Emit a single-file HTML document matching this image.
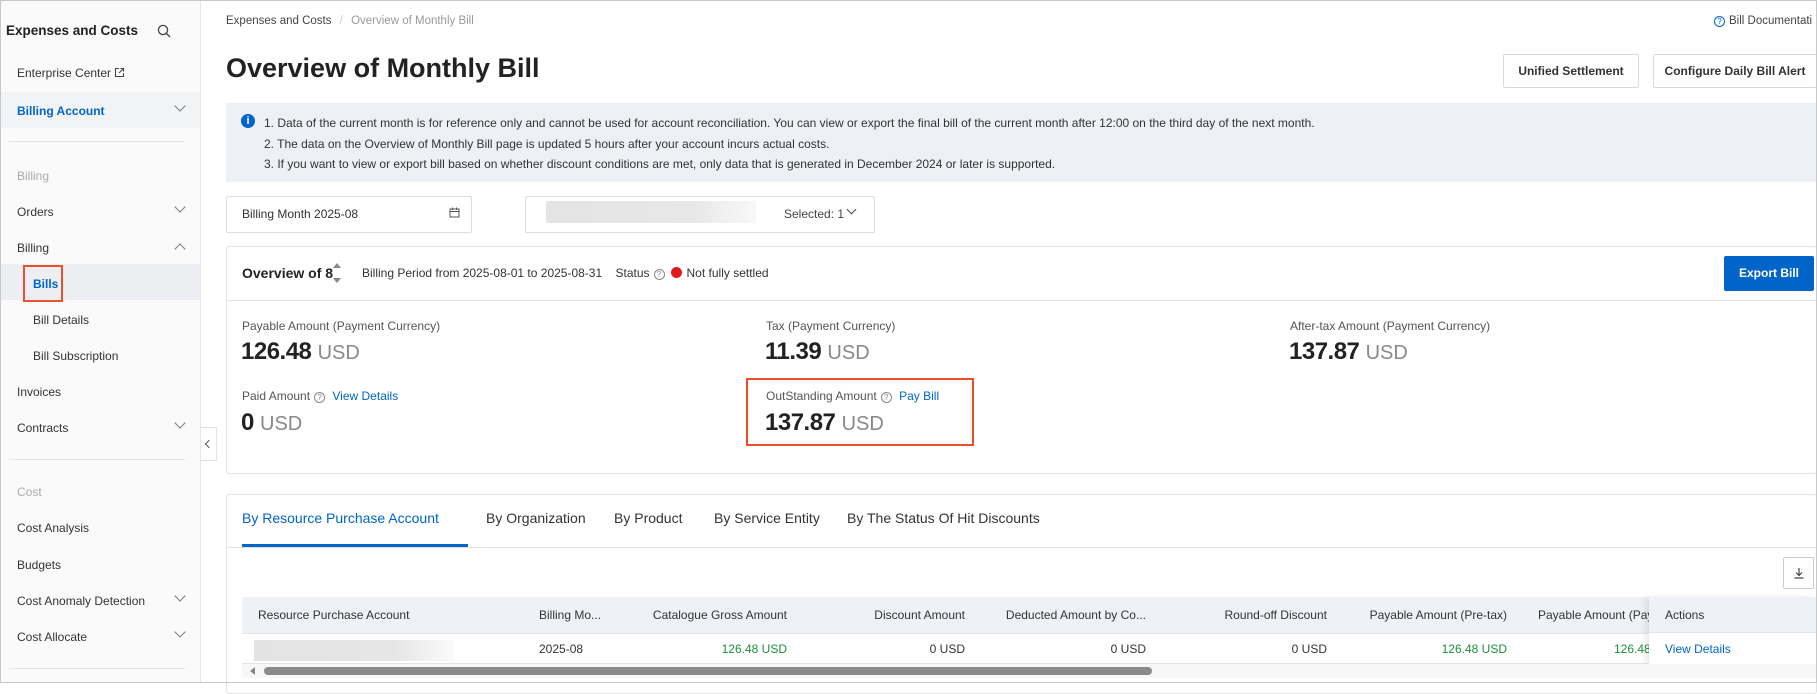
<!DOCTYPE html>
<html><head><meta charset="utf-8"><style>
*{box-sizing:border-box;margin:0;padding:0}
body{width:1817px;height:683px;overflow:hidden;background:#fff;font-family:"Liberation Sans",Arial,sans-serif;color:#333;font-size:12px;position:relative}
.a{position:absolute;white-space:nowrap}
.frame{position:absolute;left:0;top:0;width:1817px;height:683px;border:1px solid #c8c8c8;pointer-events:none;z-index:10}
.side{position:absolute;left:0;top:0;width:201px;height:683px;background:#fafafa;border-right:1px solid #e6e6e6}
.si{position:absolute;left:17px;font-size:12px;color:#333}
.chev{position:absolute;left:176px;width:8px;height:8px;border-right:1.2px solid #777;border-bottom:1.2px solid #777;transform:rotate(45deg)}
.chevu{transform:rotate(-135deg)}
.div{position:absolute;left:9px;width:176px;height:1px;background:#e3e3e3}
.btn{position:absolute;border:1px solid #d9d9d9;background:#fff;border-radius:2px;font-size:12px;font-weight:bold;color:#333;text-align:center}
.lbl{font-size:12px;color:#555}
.val{font-size:24px;font-weight:bold;color:#222;letter-spacing:-0.5px}
.val span{font-weight:normal;color:#888;font-size:20px;letter-spacing:0}
.q{display:inline-block;width:11px;height:11px;border:1px solid #888;border-radius:50%;font-size:8px;line-height:9px;text-align:center;color:#888;vertical-align:0px;margin:0 4px}
.link{color:#0064c8}
.th{position:absolute;top:608px;font-size:12px;color:#333}
.td{position:absolute;top:642px;font-size:12px;color:#333}
.g{color:#1a8f3c}
</style></head><body>
<div class="frame"></div>
<div class="side">
 <div class="a" style="left:6px;top:23px;font-size:13.5px;font-weight:bold;color:#222">Expenses and Costs</div>
 <svg class="a" style="left:157px;top:24px" width="14" height="14" viewBox="0 0 14 14"><circle cx="6" cy="6" r="4.6" fill="none" stroke="#444" stroke-width="1.3"/><line x1="9.5" y1="9.5" x2="13" y2="13" stroke="#444" stroke-width="1.3"/></svg>
 <div class="si" style="top:66px">Enterprise Center <svg width="11" height="11" viewBox="0 0 11 11" style="vertical-align:-1px"><path d="M5 1.5H1.5v8h8V6M6.5 1.5h3v3M9.5 1.5L5 6" fill="none" stroke="#444" stroke-width="1.1"/></svg></div>
 <div class="a" style="left:0;top:92px;width:200px;height:36px;background:#f2f3f5"></div>
 <div class="si" style="top:104px;color:#0064c8;font-weight:bold">Billing Account</div><div class="chev" style="top:102px"></div>
 <div class="div" style="top:141px"></div>
 <div class="si" style="top:169px;color:#aaa">Billing</div>
 <div class="si" style="top:205px">Orders</div><div class="chev" style="top:203px"></div>
 <div class="si" style="top:241px">Billing</div><div class="chev chevu" style="top:245px"></div>
 <div class="a" style="left:0;top:264px;width:200px;height:36px;background:#eceef2"></div>
 <div class="si" style="left:33px;top:277px;color:#0064c8;font-weight:bold">Bills</div>
 <div class="a" style="left:23px;top:265px;width:40px;height:37px;border:2px solid #e8512a"></div>
 <div class="si" style="left:33px;top:313px">Bill Details</div>
 <div class="si" style="left:33px;top:349px">Bill Subscription</div>
 <div class="si" style="top:385px">Invoices</div>
 <div class="si" style="top:421px">Contracts</div><div class="chev" style="top:419px"></div>
 <div class="div" style="top:459px"></div>
 <div class="si" style="top:485px;color:#aaa">Cost</div>
 <div class="si" style="top:521px">Cost Analysis</div>
 <div class="si" style="top:558px">Budgets</div>
 <div class="si" style="top:594px">Cost Anomaly Detection</div><div class="chev" style="top:592px"></div>
 <div class="si" style="top:630px">Cost Allocate</div><div class="chev" style="top:628px"></div>
 <div class="div" style="top:668px"></div>
</div>
<div class="a" style="left:201px;top:427px;width:16px;height:34px;border:1px solid #e3e3e3;border-left:none;background:#fff"><div class="a" style="left:5px;top:13px;width:6px;height:6px;border-left:1.3px solid #555;border-bottom:1.3px solid #555;transform:rotate(45deg)"></div></div>

<div class="a" style="left:226px;top:15px;font-size:11.5px;color:#444">Expenses and Costs <span style="color:#ccc;margin:0 5px">/</span> <span style="color:#999">Overview of Monthly Bill</span></div>
<div class="a" style="left:1714px;top:15px;font-size:11.5px;color:#444"><span class="q" style="border-color:#0064c8;color:#0064c8;margin-left:0">?</span>Bill Documentati</div>
<div class="a" style="left:226px;top:53px;font-size:27px;font-weight:bold;color:#222">Overview of Monthly Bill</div>
<div class="btn" style="left:1503px;top:54px;width:136px;height:34px;line-height:32px">Unified Settlement</div>
<div class="btn" style="left:1653px;top:54px;width:164px;height:34px;line-height:32px">Configure Daily Bill Alert</div>

<div class="a" style="left:226px;top:103px;width:1591px;height:79px;background:#edf0f5"></div>
<div class="a" style="left:241px;top:114px;width:14px;height:14px;border-radius:50%;background:#0064c8;color:#fff;font-size:11px;font-weight:bold;text-align:center;line-height:14px">i</div>
<div class="a" style="left:264px;top:113px;font-size:12px;color:#333;line-height:20.5px">1. Data of the current month is for reference only and cannot be used for account reconciliation. You can view or export the final bill of the current month after 12:00 on the third day of the next month.<br>2. The data on the Overview of Monthly Bill page is updated 5 hours after your account incurs actual costs.<br>3. If you want to view or export bill based on whether discount conditions are met, only data that is generated in December 2024 or later is supported.</div>

<div class="a" style="left:226px;top:196px;width:246px;height:37px;border:1px solid #ddd;border-radius:2px"></div>
<div class="a" style="left:242px;top:207px;font-size:12px">Billing Month 2025-08</div>
<svg class="a" style="left:477px;top:207px;left:477px" width="0" height="0"></svg>
<svg class="a" style="left:477px;top:207px" width="1" height="1"></svg>
<svg class="a" style="left:478px;top:207px" width="0" height="0"></svg>
<svg class="a" style="left:477px;top:0" width="0" height="0"></svg>
<svg class="a" style="left:477px;top:207px" width="0" height="0"></svg>
<svg class="a" style="left:476px;top:207px" width="0" height="0"></svg>
<svg class="a" style="left:477px;top:207px" width="0" height="0"></svg>
<svg class="a" style="left:449px;top:207px" width="11" height="11" viewBox="0 0 11 11"><rect x="1" y="2" width="9" height="8" fill="none" stroke="#555"/><line x1="1" y1="4.5" x2="10" y2="4.5" stroke="#555"/><line x1="3.5" y1="0.5" x2="3.5" y2="3" stroke="#555"/><line x1="7.5" y1="0.5" x2="7.5" y2="3" stroke="#555"/></svg>
<div class="a" style="left:525px;top:196px;width:350px;height:37px;border:1px solid #ddd;border-radius:2px"></div>
<div class="a" style="left:546px;top:201px;width:210px;height:22px;background:linear-gradient(90deg,#e4e4e4,#e8e8e8 70%,#f8f8f8)"></div>
<div class="a" style="left:784px;top:207px;font-size:12px;color:#444">Selected: 1</div>
<div class="a" style="left:848px;top:206px;width:7px;height:7px;border-right:1.3px solid #444;border-bottom:1.3px solid #444;transform:rotate(45deg)"></div>

<div class="a" style="left:226px;top:246px;width:1591px;height:228px;border:1px solid #e3e3e3;border-radius:3px"></div>
<div class="a" style="left:226px;top:300px;width:1591px;height:1px;background:#e3e3e3"></div>
<div class="a" style="left:242px;top:265px;font-size:14px;font-weight:bold;color:#222">Overview of 8</div>
<div class="a" style="left:333px;top:259px;width:0;height:0;border:4px solid transparent;border-bottom:5px solid #888"></div>
<div class="a" style="left:333px;top:278px;width:0;height:0;border:4px solid transparent;border-top:5px solid #888"></div>
<div class="a" style="left:362px;top:266px;font-size:12px;color:#333">Billing Period from 2025-08-01 to 2025-08-31 &nbsp;&nbsp; Status<span class="q">?</span><span style="display:inline-block;width:11px;height:11px;border-radius:50%;background:#e01b1b;vertical-align:-1px;margin:0 5px 0 2px"></span>Not fully settled</div>
<div class="a" style="left:1724px;top:256px;width:90px;height:35px;background:#0064c8;border-radius:2px;color:#fff;font-weight:bold;font-size:12px;text-align:center;line-height:35px">Export Bill</div>

<div class="a lbl" style="left:242px;top:319px">Payable Amount (Payment Currency)</div>
<div class="a val" style="left:241px;top:338px">126.48 <span>USD</span></div>
<div class="a lbl" style="left:766px;top:319px">Tax (Payment Currency)</div>
<div class="a val" style="left:765px;top:338px">11.39 <span>USD</span></div>
<div class="a lbl" style="left:1290px;top:319px">After-tax Amount (Payment Currency)</div>
<div class="a val" style="left:1289px;top:338px">137.87 <span>USD</span></div>
<div class="a lbl" style="left:242px;top:389px">Paid Amount<span class="q">?</span> <span class="link">View Details</span></div>
<div class="a val" style="left:241px;top:409px">0 <span>USD</span></div>
<div class="a lbl" style="left:766px;top:389px">OutStanding Amount<span class="q">?</span> <span class="link">Pay Bill</span></div>
<div class="a val" style="left:765px;top:409px">137.87 <span>USD</span></div>
<div class="a" style="left:746px;top:378px;width:228px;height:68px;border:2px solid #e8512a"></div>

<div class="a" style="left:226px;top:494px;width:1591px;height:200px;border:1px solid #e3e3e3;border-radius:3px"></div>
<div class="a" style="left:226px;top:547px;width:1591px;height:1px;background:#e3e3e3"></div>
<div class="a" style="left:242px;top:510px;font-size:14px;color:#0064c8">By Resource Purchase Account</div>
<div class="a" style="left:242px;top:544px;width:226px;height:3px;background:#0064c8"></div>
<div class="a" style="left:486px;top:510px;font-size:14px;color:#333">By Organization</div>
<div class="a" style="left:614px;top:510px;font-size:14px;color:#333">By Product</div>
<div class="a" style="left:714px;top:510px;font-size:14px;color:#333">By Service Entity</div>
<div class="a" style="left:847px;top:510px;font-size:14px;color:#333">By The Status Of Hit Discounts</div>
<div class="a" style="left:1783px;top:557px;width:31px;height:32px;border:1px solid #ccc;border-radius:2px"><svg class="a" style="left:9px;top:9px" width="12" height="12" viewBox="0 0 12 12"><path d="M6 1v7M3 5.5L6 8.5 9 5.5M1.5 11h9" fill="none" stroke="#444" stroke-width="1.2"/></svg></div>

<div class="a" style="left:242px;top:597px;width:1575px;height:36px;background:#eef1f6"></div>
<div class="a" style="left:242px;top:633px;width:1575px;height:1px;background:#e3e3e3"></div>
<div class="a" style="left:242px;top:663px;width:1575px;height:1px;background:#e3e3e3"></div>
<div class="th" style="left:258px">Resource Purchase Account</div>
<div class="th" style="left:539px">Billing Mo...</div>
<div class="th" style="left:620px;width:167px;text-align:right">Catalogue Gross Amount</div>
<div class="th" style="left:800px;width:165px;text-align:right">Discount Amount</div>
<div class="th" style="left:980px;width:166px;text-align:right">Deducted Amount by Co...</div>
<div class="th" style="left:1160px;width:167px;text-align:right">Round-off Discount</div>
<div class="th" style="left:1340px;width:167px;text-align:right">Payable Amount (Pre-tax)</div>
<div class="th" style="left:1538px">Payable Amount (Pay</div>
<div class="a" style="left:254px;top:640px;width:200px;height:21px;background:linear-gradient(90deg,#e3e3e3,#e6e6e6 70%,#fafafa)"></div>
<div class="td" style="left:539px">2025-08</div>
<div class="td g" style="left:620px;width:167px;text-align:right">126.48 USD</div>
<div class="td" style="left:800px;width:165px;text-align:right">0 USD</div>
<div class="td" style="left:980px;width:166px;text-align:right">0 USD</div>
<div class="td" style="left:1160px;width:167px;text-align:right">0 USD</div>
<div class="td g" style="left:1340px;width:167px;text-align:right">126.48 USD</div>
<div class="td g" style="left:1614px">126.48 USD</div>
<div class="a" style="left:1649px;top:597px;width:168px;height:67px;background:#fff;box-shadow:-4px 0 6px rgba(0,0,0,.08)"></div>
<div class="a" style="left:1649px;top:597px;width:168px;height:36px;background:#eef1f6;border-bottom:1px solid #e3e3e3"></div>
<div class="th" style="left:1665px">Actions</div>
<div class="td" style="left:1665px;color:#0064c8">View Details</div>
<div class="a" style="left:242px;top:664px;width:1575px;height:14px;background:#f7f7f7"></div>
<div class="a" style="left:250px;top:667px;width:0;height:0;border:4px solid transparent;border-right:5px solid #888;border-left:none"></div>
<div class="a" style="left:264px;top:667px;width:888px;height:8px;border-radius:4px;background:#8a8a8a"></div>
</body></html>
